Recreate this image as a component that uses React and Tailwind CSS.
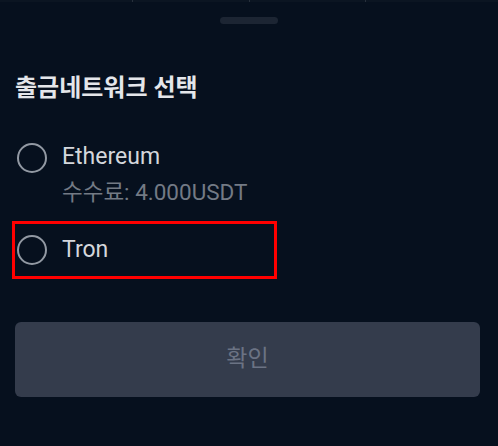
export default function App() {
  const font = { fontFamily: '"Roboto", "Noto Sans CJK KR", sans-serif' };
  return (
    <div className="w-[498px] h-[446px] bg-[#06101e] flex flex-col overflow-hidden" style={font}>
      <div className="h-[2px] bg-[#0b1522] flex shrink-0">
        <div className="w-[16px]" />
        <div className="flex-1 border-r border-[#27303c]" />
        <div className="flex-1 border-r border-[#27303c]" />
        <div className="flex-1 border-r border-[#27303c]" />
        <div className="flex-1" />
        <div className="w-[16px]" />
      </div>
      <div className="flex justify-center pt-[15px]">
        <div className="w-[58px] h-[7px] rounded-full bg-[#1c2533]" />
      </div>
      <h1 className="mt-[48px] ml-[15px] text-[24px] leading-[32px] font-bold text-[#e4e6ea]">
        출금네트워크 선택
      </h1>
      <div className="mt-[39px] ml-[17px] flex items-start gap-[15px]">
        <div className="w-[30px] h-[30px] rounded-full border-2 border-[#9299a3]" />
        <div className="flex flex-col">
          <span className="text-[23px] leading-[28px] text-[#d4d7dc]">Ethereum</span>
          <span className="mt-[7px] text-[22.5px] leading-[28px] text-[#737a85]">수수료: 4.000USDT</span>
        </div>
      </div>
      <div className="mt-[15px] ml-[12px] w-[265px] h-[58px] border-[3px] border-[#ff0000] flex items-center pl-[2px] gap-[15px]">
        <div className="w-[30px] h-[30px] rounded-full border-2 border-[#9299a3]" />
        <span className="text-[23px] leading-[28px] text-[#d4d7dc]">Tron</span>
      </div>
      <button className="mt-[43px] ml-[15px] mr-[18px] h-[75px] rounded-[6px] bg-[#343c4c] text-[23px] text-[#6b7384]">
        확인
      </button>
    </div>
  );
}
